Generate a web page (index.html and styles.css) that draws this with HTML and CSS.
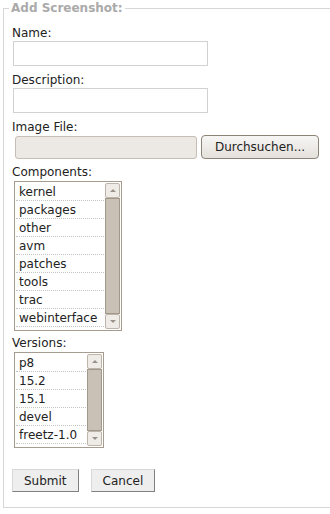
FILE: index.html
```html
<!DOCTYPE html>
<html lang="en">
<head>
    <meta charset="UTF-8">
    <title>Add Screenshot</title>
    <link rel="stylesheet" href="styles.css">
</head>
<body>
    <form class="shot-form">
        <fieldset>
            <legend>Add Screenshot:</legend>

            <label for="name">Name:</label>
            <input type="text" id="name" class="text-field">

            <label for="description">Description:</label>
            <input type="text" id="description" class="text-field">

            <label>Image File:</label>
            <div class="file-row">
                <div class="file-path"></div>
                <button type="button" class="browse-btn">Durchsuchen...</button>
            </div>

            <label>Components:</label>
            <div class="listbox components">
                <ul class="items">
                    <li>kernel</li>
                    <li>packages</li>
                    <li>other</li>
                    <li>avm</li>
                    <li>patches</li>
                    <li>tools</li>
                    <li>trac</li>
                    <li>webinterface</li>
                </ul>
                <div class="scrollbar">
                    <div class="arrow up"></div>
                    <div class="thumb"></div>
                    <div class="arrow down"></div>
                </div>
            </div>

            <label>Versions:</label>
            <div class="listbox versions">
                <ul class="items">
                    <li>p8</li>
                    <li>15.2</li>
                    <li>15.1</li>
                    <li>devel</li>
                    <li>freetz-1.0</li>
                </ul>
                <div class="scrollbar">
                    <div class="arrow up"></div>
                    <div class="thumb"></div>
                    <div class="arrow down"></div>
                </div>
            </div>

            <div class="actions">
                <button type="submit" class="btn">Submit</button>
                <button type="button" class="btn">Cancel</button>
            </div>
        </fieldset>
    </form>
</body>
</html>
```

FILE: styles.css
```css
html, body {
    margin: 0;
    background-color: #ffffff;
}
body {
    font-family: "DejaVu Sans", sans-serif;
    font-size: 12px;
    color: #222;
}
fieldset {
    margin: 1px 0 0 3px;
    padding: 10px 8px 15px 8px;
    border: 1px solid #d6d6d6;
    border-right: none;
}
legend {
    margin-left: -3px;
    padding: 0 2px;
    font-weight: bold;
    color: #aaa;
    line-height: 15px;
}
label {
    display: block;
    line-height: 15px;
}
.text-field {
    display: block;
    box-sizing: border-box;
    width: 195px;
    height: 25px;
    margin: 0 0 7px 1px;
    border: 1px solid #d2d2d2;
    padding: 2px 4px;
    font-family: inherit;
    font-size: 12px;
}
.file-row {
    display: flex;
    gap: 4px;
    align-items: center;
    margin: 0 0 6px 3px;
}
.file-path {
    width: 180px;
    height: 21px;
    border: 1px solid #c6bdb4;
    border-radius: 3px;
    background-color: #ece8e4;
}
.browse-btn {
    width: 118px;
    height: 24px;
    border: 1px solid #8c8276;
    border-radius: 4px;
    background: linear-gradient(#f7f6f4, #e4e0db);
    font-family: inherit;
    font-size: 12px;
    color: #222;
    padding: 0;
}
.listbox {
    display: flex;
    padding: 1px;
    border: 1px solid #a79c90;
}
.components {
    width: 104px;
    height: 146px;
    margin: 1px 0 5px 2px;
}
.versions {
    width: 86px;
    height: 92px;
    margin: 1px 0 0 2px;
}
.items {
    flex: 1;
    list-style: none;
    margin: 0;
    padding: 0;
    overflow: hidden;
}
.items li {
    height: 17px;
    line-height: 18px;
    padding-left: 3px;
    border-bottom: 1px dotted #c4c4c4;
    white-space: nowrap;
}
.scrollbar {
    display: flex;
    flex-direction: column;
    width: 15px;
    margin-left: 1px;
}
.arrow {
    position: relative;
    height: 13px;
    border: 1px solid #bdb4aa;
    border-radius: 2px;
    background-color: #efece8;
}
.arrow::after {
    content: "";
    position: absolute;
    left: 4px;
    top: 5px;
    border-left: 3px solid transparent;
    border-right: 3px solid transparent;
}
.arrow.up::after {
    border-bottom: 3px solid #9a9189;
}
.arrow.down::after {
    border-top: 3px solid #9a9189;
}
.thumb {
    flex: 1;
    border: 1px solid #a2978b;
    background-color: #c9c0b6;
}
.actions {
    display: flex;
    gap: 12px;
    margin-top: 21px;
}
.btn {
    height: 23px;
    padding: 0 11px;
    border: 1px solid;
    border-color: #d8d8d8 #808080 #808080 #d8d8d8;
    background-color: #eeeeee;
    font-family: inherit;
    font-size: 12px;
    color: #222;
}
```
